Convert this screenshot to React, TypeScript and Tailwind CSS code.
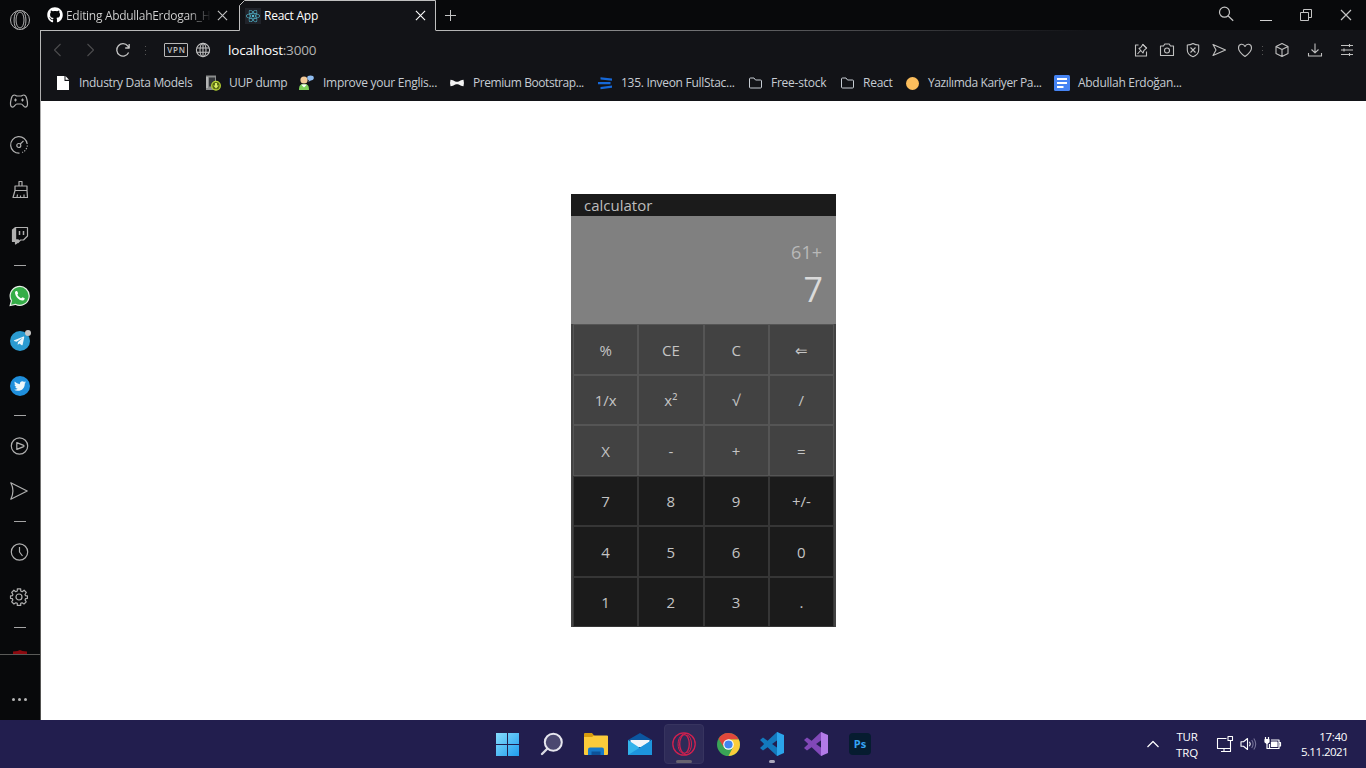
import type { ReactNode } from "react";
import { FaGithub, FaReact, FaTelegramPlane, FaTwitter } from "react-icons/fa";

type IconProps = { children: ReactNode; className?: string; box?: string; sw?: number };

function Line({ children, className = "h-5 w-5", box = "0 0 20 20", sw = 1.2 }: IconProps) {
  return (
    <svg viewBox={box} className={"shrink-0 " + className} fill="none" stroke="currentColor" strokeWidth={sw} strokeLinejoin="round">
      {children}
    </svg>
  );
}

function SideItem({ h, children }: { h: string; children: ReactNode }) {
  return <div className={"flex shrink-0 items-center justify-center " + h}>{children}</div>;
}

function Dash({ h }: { h: string }) {
  return (
    <SideItem h={h}>
      <span className="h-px w-3 bg-[#a5a5a5]" />
    </SideItem>
  );
}

function Sidebar() {
  return (
    <aside className="flex h-[720px] w-10 shrink-0 flex-col overflow-hidden bg-[#08090b] text-[#b0b0b0]">
      <SideItem h="h-10 w-10">
        <Line className="h-[22px] w-[22px]" box="0 0 22 22" sw={1}>
          <circle cx="11" cy="11" r="9.5" />
          <ellipse cx="11" cy="11" rx="4" ry="8" />
          <path d="M9 1.8C4 3 3.500 19 9 20.200M13 1.800C18 3 18.500 19 13 20.200" />
        </Line>
      </SideItem>
      <div className="h-[38px] shrink-0" />
      <SideItem h="h-[45px] w-[38px]">
        <Line>
          <path d="M5.500 4C6.500 4 7 5 8 5h4c1 0 1.500-1 2.500-1 2 0 2.700 1.200 3.200 3.500.500 2 .900 4.200.800 5.800-.100 1.800-.900 2.900-2.200 2.900-1.800 0-2.300-3.200-4.300-3.200H8c-2 0-2.500 3.200-4.300 3.200-1.300 0-2.100-1.100-2.200-2.900-.100-1.600.300-3.800.800-5.800C2.800 5.200 3.500 4 5.500 4z" />
          <path d="M5 9h3M6.500 7.500v3M12 9h3M13.500 7.500v3" strokeWidth="1" />
        </Line>
      </SideItem>
      <SideItem h="h-[44px] w-[38px]">
        <Line>
          <path d="M10.500 18.200A8.300 8.300 0 1 1 18.200 9" />
          <path d="M18.300 10.500a8.300 8.300 0 0 1-5 7" strokeDasharray="1.200 1.500" />
          <circle cx="9.800" cy="10.500" r="2" />
          <path d="M11.300 9l3.200-3.200" />
        </Line>
      </SideItem>
      <SideItem h="h-[45px] w-10">
        <Line>
          <path d="M9 6V1.500h3V6M5 6h12v4.500H5zM5 10.500L3 17.500h14.500l-.500-7M7 17.500l.500-3M10.500 17.500v-2M14 17.500v-3" />
        </Line>
      </SideItem>
      <SideItem h="h-[45px] w-10">
        <Line sw={1.2}>
          <path d="M5.500 2.500h12v8.500l-4 4h-3l-2.500 2.500v-2.500H5.500z" />
          <path d="M5.500 2.500L2.500 5v11.500h3v2.500l3-2.500v-1.500h-3z" fill="currentColor" />
          <path d="M9.500 6v4M13.500 6v4" strokeWidth="1.500" />
        </Line>
      </SideItem>
      <Dash h="h-[17px] w-10" />
      <SideItem h="h-[44px] w-10">
        <svg viewBox="0 0 22 22" className="h-[22px] w-[22px]">
          <path d="M1.200 20.500l1.300-4.800A9.500 9.500 0 1 1 6.300 19.300z" fill="#35ad48" stroke="#e9f2e9" strokeWidth="1.200" />
          <path d="M6 7.500C6 6.500 7 5.800 7.800 6c.500.100 1 1.400 1.300 2.300.100.500-.700 1.100-.700 1.500.600 1.500 2 2.700 3.600 3.400.600.100 1-1 1.500-1 .300 0 2 .800 2.200 1.100.100 1.500-1.200 2.300-2.400 2.300C9.500 15.200 6 11 6 7.500z" fill="#fff" />
        </svg>
      </SideItem>
      <SideItem h="h-[45px] w-10">
        <div className="relative flex h-5 w-5 items-center justify-center rounded-full bg-[#2b9bd1]">
          <FaTelegramPlane className="mr-0.5 h-3 w-3 text-[#eef7fb]" />
          <span className="absolute -top-[1px] -right-[1px] h-1.5 w-1.5 rounded-full bg-[#c6c6c6]" />
        </div>
      </SideItem>
      <SideItem h="h-[45px] w-10">
        <div className="flex h-5 w-5 items-center justify-center rounded-full bg-[#1f8fdc]">
          <FaTwitter className="h-3 w-3 text-[#eef7fb]" />
        </div>
      </SideItem>
      <Dash h="h-[15px] w-10" />
      <SideItem h="h-[45px] w-[39px]">
        <Line>
          <circle cx="9.500" cy="10" r="8.200" />
          <path d="M6.800 6.600v6.800L13.700 10.600q.700-.600 0-1.200z" />
        </Line>
      </SideItem>
      <SideItem h="h-[46px] w-[38px]">
        <Line>
          <path d="M1.800 1.800L18.200 10 1.800 18.200C4.500 13 4.500 7 1.800 1.800z" />
        </Line>
      </SideItem>
      <Dash h="h-[15px] w-10" />
      <SideItem h="h-[45px] w-[39px]">
        <Line>
          <circle cx="9.500" cy="10" r="8.200" />
          <path d="M9.500 5v5l3 4" />
        </Line>
      </SideItem>
      <SideItem h="h-[45px] w-[38px]">
        <Line>
          <circle cx="10" cy="10" r="3" />
          <path d="M8.300 4V1.800h3.400V4l1.500.700 1.900-1.500 2.200 2.300-1.300 2 .500 1.200 1.900.200v2.400l-1.900.400-.500 1.200 1.200 1.900-2.200 2.200-1.900-1.200-1.400.600v2H8.300v-2l-1.500-.600-1.900 1.200-2.200-2.200 1.200-1.900-.500-1.200-1.900-.400V8.900l1.900-.200.500-1.200-1.200-2 2.200-2.300 1.900 1.500z" />
        </Line>
      </SideItem>
      <Dash h="h-4 w-10" />
      <div className="flex h-[20px] shrink-0 items-end justify-center border-b border-[#5a5a58]">
        <svg viewBox="0 0 14 4" className="h-1 w-3.5">
          <path d="M0 4V1.500L4.500 1 7 0l2.500 1L14 1.500V4z" fill="#8c0a10" />
        </svg>
      </div>
      <div className="flex h-[88px] w-[39px] shrink-0 items-center justify-center gap-[3px]">
        <span className="h-[3px] w-[3px] rounded-full bg-[#b5b5b5]" />
        <span className="h-[3px] w-[3px] rounded-full bg-[#b5b5b5]" />
        <span className="h-[3px] w-[3px] rounded-full bg-[#b5b5b5]" />
      </div>
    </aside>
  );
}

function Cross({ className }: { className: string }) {
  return (
    <Line className={className} box="0 0 12 12" sw={1.2}>
      <path d="M1 1l10 10M11 1L1 11" />
    </Line>
  );
}

function TabStrip() {
  return (
    <header className="flex h-[31px] shrink-0 bg-[#08090b] text-[#c4c4c4]">
      <div className="flex w-[199px] items-center border-b border-[#b9b9b9] pl-[7px]">
        <FaGithub className="h-4 w-4 shrink-0 text-white" />
        <div className="ml-[3px] w-[144px] overflow-hidden bg-gradient-to-r from-[#d4d4d4] from-85% to-[#1a1b1d] bg-clip-text pt-px text-[12px] tracking-[-0.300px] whitespace-nowrap text-transparent">
          Editing AbdullahErdogan_H
        </div>
        <Cross className="ml-[7px] h-[11px] w-[11px]" />
      </div>
      <div className="relative flex w-[197px] items-center pl-[6px]">
        <svg viewBox="0 0 197 31" className="absolute inset-0 h-[31px] w-[197px]">
          <path d="M0.500 31V5.500L5.500 0.500H196.500V31z" fill="#121317" />
          <path d="M0 30.500H0.500V5.500L5.500 0.500H196.500V30.500" fill="none" stroke="#bfbfbf" />
        </svg>
        <div className="relative flex h-4 w-4 items-center justify-center bg-[#20232a]">
          <FaReact className="h-3.5 w-3.5 text-[#53b9d1]" />
        </div>
        <span className="relative ml-[3px] w-[150px] pt-px text-[12px] font-medium tracking-[-0.250px] text-white">React App</span>
        <Cross className="relative ml-[1px] h-[11px] w-[11px] text-white" />
      </div>
      <div className="flex flex-1 flex-col">
        <div className="flex h-[30px] items-center justify-between">
          <Line className="ml-[9px] h-[11px] w-[11px]" box="0 0 11 11" sw={1}>
            <path d="M5.500 0v11M0 5.500h11" />
          </Line>
          <div className="flex">
            <div className="flex w-10 items-center justify-center">
              <Line className="mb-0.5 h-4 w-4" box="0 0 16 16">
                <circle cx="6.500" cy="6.200" r="5" />
                <path d="M10.200 10l5 4.800" />
              </Line>
            </div>
            <div className="flex w-10 items-center justify-center">
              <span className="mt-[10px] h-px w-3 bg-[#d0d0d0]" />
            </div>
            <div className="flex w-10 items-center justify-center">
              <Line className="h-3 w-3" box="0 0 12 12" sw={1}>
                <path d="M0.500 3.500h8v8h-8zM3.500 3.500v-3h8v8h-3" />
              </Line>
            </div>
            <div className="flex w-10 items-center justify-center">
              <Cross className="h-3 w-3" />
            </div>
          </div>
        </div>
        <div className="h-px bg-gradient-to-r from-[#b9b9b9] to-[#121317] to-70%" />
      </div>
    </header>
  );
}

function Dots() {
  return (
    <span className="flex flex-col items-center gap-[3px]">
      <span className="h-px w-px bg-[#555]" />
      <span className="h-px w-px bg-[#555]" />
      <span className="h-px w-px bg-[#555]" />
    </span>
  );
}

function Tool({ w, children }: { w: string; children: ReactNode }) {
  return (
    <div className={"flex shrink-0 items-center justify-center " + w}>
      <Line className="h-4 w-4" box="0 0 16 16" sw={1.1}>
        {children}
      </Line>
    </div>
  );
}

function Toolbar() {
  return (
    <div className="flex h-[38px] shrink-0 items-center justify-between text-[#c0c0c0]">
      <div className="flex items-center">
        <div className="flex text-[#4b4b4e]">
          <Tool w="w-[34px]">
            <path d="M10.500 2L4.500 8l6 6" />
          </Tool>
          <Tool w="w-[32px]">
            <path d="M4.500 2l6 6-6 6" />
          </Tool>
        </div>
        <div className="flex w-[32px] justify-center text-[#c4c4c4]">
          <Line className="h-4 w-4" box="0 0 16 16" sw={1.3}>
            <path d="M13.600 10.500A6.200 6.200 0 1 1 12.800 4L14 5.800M14.200 2v4h-4" />
          </Line>
        </div>
        <div className="flex w-3 justify-center">
          <Dots />
        </div>
        <div className="ml-[13px] flex h-[14px] w-6 items-center justify-center rounded-[1px] border border-[#b8b8b8] pl-px text-[8px] font-semibold tracking-[0.800px]">
          VPN
        </div>
        <div className="ml-[7px]">
          <Line className="h-4 w-4" box="0 0 16 16" sw={1.1}>
            <circle cx="8" cy="8" r="6.600" />
            <ellipse cx="8" cy="8" rx="3" ry="6.600" />
            <path d="M1.700 6h12.600M1.700 10.300h12.600M8 1.400v13.200" />
          </Line>
        </div>
        <span className="ml-[17px] text-[13.500px] tracking-[-0.200px] text-[#b4b4b4]">
          <span className="text-white">localhost</span>:3000
        </span>
      </div>
      <div className="flex items-center">
        <Tool w="w-[26px]">
          <path d="M5.500 3H2.500v11h11V9.500M4.500 12l3.500-4M6 6.500l4 4.500 .800-2.300 2.700-2.500-3.700-3.700-2 3z" />
          <path d="M9.500 2.200l4.400 4.200" />
        </Tool>
        <Tool w="w-[26px]">
          <path d="M1.500 4h3l1.300-2h4.400l1.300 2h3v9.500h-13z" />
          <circle cx="8" cy="8.500" r="2.500" />
        </Tool>
        <Tool w="w-[26px]">
          <path d="M8 1.500c2 1.200 4 1.500 5.700 1.500v5c0 3.500-3 5.800-5.700 6.700C5.300 13.800 2.300 11.500 2.300 8V3C4 3 6 2.700 8 1.500zM5.500 5.500l5 5M10.500 5.500l-5 5" />
        </Tool>
        <Tool w="w-[26px]">
          <path d="M2 2.500L14.500 8 2 13.500 5 8z" />
        </Tool>
        <Tool w="w-[26px]">
          <path d="M8 14.500C4.500 12 1.500 9 1.500 6c0-4.500 5-5 6.500-1.500C9.500 1 14.500 1.500 14.500 6c0 3-3 6-6.500 8.500z" />
        </Tool>
        <span className="flex w-2 justify-center">
          <Dots />
        </span>
        <Tool w="w-8">
          <path d="M8 1.500l6 3v7l-6 3-6-3v-7zM2 4.500l6 3 6-3M8 7.500v7" />
        </Tool>
        <Tool w="w-[33px]">
          <path d="M8 1.500v9M4.500 7.500L8 10.800l3.500-3.300M1.500 11v3h13v-3" />
        </Tool>
        <Tool w="w-[32px]">
          <path d="M2 3.500h12M2 8h12M2 12.500h12M10.500 2v3M5 6.500v3M10.500 11v3" />
        </Tool>
        <div className="w-[3px]" />
      </div>
    </div>
  );
}

function Folder() {
  return (
    <Line className="h-4 w-4" box="0 0 16 16" sw={1}>
      <path d="M1.500 4q0-1 1-1h3.500l1.500 2h5q1 0 1 1v6q0 1-1 1h-10q-1 0-1-1z" />
    </Line>
  );
}

const bookmarks: { w: string; label: string; track: string; icon: ReactNode }[] = [
  {
    w: "w-[149px]",
    label: "Industry Data Models",
    track: "tracking-[-0.320px]",
    icon: (
      <svg viewBox="0 0 16 16" className="h-4 w-4">
        <path d="M1 1h7.500v5H13v9H1z M9.500 1L13 4.800H9.500z" fill="#fff" />
      </svg>
    ),
  },
  {
    w: "w-[93px]",
    label: "UUP dump",
    track: "ml-px tracking-[-0.350px]",
    icon: (
      <svg viewBox="0 0 16 16" className="h-4 w-4">
        <path d="M1 .500h10v14.500H1z" fill="#8a8c8c" />
        <path d="M4 2.500h6v9H4z" fill="#33363a" />
        <path d="M2 2v11" stroke="#ddd" />
        <circle cx="11" cy="10.700" r="4.300" fill="#5a6a14" stroke="#b6d333" strokeWidth="1.300" />
        <path d="M10 8h2v2.500h1.700L11 13.500l-2.700-3H10z" fill="#d9ee63" />
      </svg>
    ),
  },
  {
    w: "w-[151px]",
    label: "Improve your Englis...",
    track: "ml-[2px] tracking-[-0.280px]",
    icon: (
      <svg viewBox="0 0 16 16" className="h-4 w-4">
        <circle cx="6" cy="5" r="3.600" fill="#f2c998" />
        <path d="M1 15c0-4 1-6 5-6s5 2 5 6z" fill="#7fd05a" />
        <path d="M3 9.500l3 3 3-3z" fill="#fff" />
        <ellipse cx="12.500" cy="3" rx="3.300" ry="2.400" fill="#8fbcf0" />
        <path d="M11 4.500l-.500 2.500 2.500-2z" fill="#8fbcf0" />
      </svg>
    ),
  },
  {
    w: "w-[149px]",
    label: "Premium Bootstrap...",
    track: "ml-px tracking-[-0.430px]",
    icon: (
      <svg viewBox="0 0 16 16" className="h-4 w-4">
        <path d="M1.500 4.800c2 .300 4 1.200 5.500 2h2c1.500-.800 3.500-1.700 5.500-2q.900 3.200 0 6.400c-2-.300-4-1.200-5.500-2H7c-1.500.800-3.500 1.700-5.500 2q-.900-3.200 0-6.400z" fill="#f3f3f3" />
      </svg>
    ),
  },
  {
    w: "w-[150px]",
    label: "135. Inveon FullStac...",
    track: "tracking-[-0.290px]",
    icon: (
      <svg viewBox="0 0 16 16" className="h-4 w-4">
        <path d="M2.500 2.200l11.500 1.400v2.200L2.500 4.500zM0 7h12.500v2.200H0zM2.500 11.900L14 10.600v2.200L2.500 14.200z" fill="#1668d8" />
      </svg>
    ),
  },
  { w: "w-[92px]", label: "Free-stock", track: "tracking-[-0.250px]", icon: <Folder /> },
  { w: "w-[65px]", label: "React", track: "tracking-[-0.250px]", icon: <Folder /> },
  {
    w: "w-[149px]",
    label: "Yazılımda Kariyer Pa...",
    track: "tracking-[-0.390px]",
    icon: <span className="ml-px h-[13px] w-[13px] rounded-full bg-[#fbbd5c]" />,
  },
  {
    w: "w-[149px]",
    label: "Abdullah Erdoğan...",
    track: "ml-px tracking-[-0.280px]",
    icon: (
      <svg viewBox="0 0 16 16" className="h-4 w-4">
        <rect width="16" height="16" rx="1.500" fill="#4684f3" />
        <path d="M3 4h10M3 8h10M3 12h6.500" stroke="#fff" strokeWidth="1.800" />
      </svg>
    ),
  },
];

function Bookmarks() {
  return (
    <nav className="flex h-[32px] shrink-0 items-center pb-[4px] pl-[15px] text-[#c6ccd3]">
      {bookmarks.map((b) => (
        <div key={b.label} className={"flex shrink-0 items-center gap-[7px] " + b.w}>
          <span className="flex w-4 shrink-0">{b.icon}</span>
          <span className={"text-[12px] whitespace-nowrap " + b.track}>{b.label}</span>
        </div>
      ))}
    </nav>
  );
}

const keys = [
  "%", "CE", "C", "⇐",
  "1/x", "x²", "√", "/",
  "X", "-", "+", "=",
  "7", "8", "9", "+/-",
  "4", "5", "6", "0",
  "1", "2", "3", ".",
];

function Calculator() {
  return (
    <section className="mt-[93px] ml-[530px] flex h-[433px] w-[265px] flex-col bg-[#434343]">
      <div className="h-[22px] bg-[#1b1b1b] pl-[13px] text-[15px] leading-[23px] text-[#bdbdbd]">calculator</div>
      <div className="flex h-[108px] flex-col items-end bg-[#808080] pt-[23px] pr-[13px]">
        <div className="pr-px text-[18px] leading-[26px] text-[#b9b9b9]">61+</div>
        <div className="text-[34px] leading-[48px] text-[#dadada]">7</div>
      </div>
      <div className="grid h-[303px] grid-cols-4 grid-rows-6 px-0.5">
        {keys.map((k, i) => (
          <button
            key={k}
            className={
              "flex items-center justify-center border pt-px text-[15px] text-[#c4c4c4] " +
              (i < 12 ? "border-[#555555] bg-[#424242]" : "border-[#363636] bg-[#1b1b1b]")
            }
          >
            {k}
          </button>
        ))}
      </div>
    </section>
  );
}

function Visual({ left, right }: { left: string; right: string }) {
  return (
    <svg viewBox="0 0 26 26" className="h-[26px] w-[26px]">
      <path d="M1 9l3-2.500L20 18v6L18 25z" fill={left} />
      <path d="M1 17l3 2.500L20 8V2l-2-1z" fill={left} />
      <path d="M18 1l7 3v18l-7 3z" fill={right} />
    </svg>
  );
}

const apps: { name: string; icon: ReactNode }[] = [
  {
    name: "start",
    icon: (
      <svg viewBox="0 0 23 23" className="h-[23px] w-[23px]">
        <defs>
          <linearGradient id="win" x1="0" y1="0" x2="1" y2="1" gradientUnits="objectBoundingBox">
            <stop offset="0" stopColor="#86dcfd" />
            <stop offset="1" stopColor="#1f9dee" />
          </linearGradient>
        </defs>
        <path d="M0 0h11v11H0zM12 0h11v11H12zM0 12h11v11H0zM12 12h11v11H12z" fill="url(#win)" />
      </svg>
    ),
  },
  {
    name: "search",
    icon: (
      <svg viewBox="0 0 24 24" className="h-6 w-6">
        <path d="M7.500 16.500L2 22" stroke="#d9d9e3" strokeWidth="2.400" strokeLinecap="round" />
        <circle cx="13.300" cy="10.300" r="8.500" fill="#4b4870" stroke="#e6e6ee" strokeWidth="2" />
      </svg>
    ),
  },
  {
    name: "files",
    icon: (
      <svg viewBox="0 0 24 22" className="h-[22px] w-6">
        <path d="M0 1q0-1 1-1h7l2.500 3H24v6H0z" fill="#d79b0c" />
        <path d="M0 4h8l2-1.500h13q1 0 1 1V21q0 1-1 1H1q-1 0-1-1z" fill="#fccb3a" />
        <path d="M4 22v-5.500q0-2 2-2h12q2 0 2 2V22z" fill="#1779c8" />
        <path d="M7.500 18.500h9V22h-9z" fill="#0d5299" />
      </svg>
    ),
  },
  {
    name: "mail",
    icon: (
      <svg viewBox="0 0 24 22" className="h-[22px] w-6">
        <path d="M0 7L12 0l12 7v6H0z" fill="#0b56a0" />
        <path d="M2.500 7h19v7h-19z" fill="#f2f5f8" />
        <path d="M0 7l12 8 12-8v15H0z" fill="#33b3ea" />
        <path d="M0 22l12-7.500L24 7v15z" fill="#1d94dc" />
      </svg>
    ),
  },
  {
    name: "opera",
    icon: (
      <svg viewBox="0 0 24 24" className="h-6 w-6" fill="none" stroke="#d3204f" strokeWidth="1.300">
        <circle cx="12" cy="12" r="11.200" />
        <ellipse cx="12.500" cy="12" rx="4.800" ry="9.300" />
        <path d="M14.500 1.500C3.500 1 3 23 14.500 22.500M15 2.800c6 2 6 16.400 0 18.400" strokeWidth="1" />
      </svg>
    ),
  },
  {
    name: "chrome",
    icon: (
      <svg viewBox="0 0 24 24" className="h-[23px] w-[23px]">
        <circle cx="12" cy="12" r="12" fill="#3aa456" />
        <path d="M12 6.500H22.600A12 12 0 0 1 12 24L16.800 14.700z" fill="#fbcc3a" />
        <path d="M1.600 6A12 12 0 0 1 22.600 6.500H12L7 14.500z" fill="#e0473b" />
        <circle cx="12" cy="12" r="5.500" fill="#fff" />
        <circle cx="12" cy="12" r="4.300" fill="#4285f0" />
      </svg>
    ),
  },
  { name: "code", icon: <Visual left="#1379bd" right="#2ba4ea" /> },
  { name: "studio", icon: <Visual left="#8148b8" right="#b27be8" /> },
  {
    name: "ps",
    icon: (
      <div className="flex h-[22px] w-[22px] items-center justify-center rounded-[4px] bg-[#061c30] text-[11px] font-bold text-[#35a3f5]">
        Ps
      </div>
    ),
  },
];

function Taskbar() {
  return (
    <footer className="flex h-12 shrink-0 items-center justify-between bg-[#221e4e] text-white">
      <div className="ml-[485px] flex">
        {apps.map((a) => (
          <div key={a.name} className={"flex h-12 items-center justify-center " + (a.name === "start" ? "w-[45px]" : "w-11")}>
            <div
              className={
                "relative flex h-10 w-10 items-center justify-center rounded-[4px] " +
                (a.name === "opera" ? "border border-[#37345f] bg-[#2e2b58]" : "")
              }
            >
              {a.icon}
              {a.name === "opera" && <span className="absolute bottom-0 h-[3px] w-4 rounded-full bg-[#67636f]" />}
              {a.name === "code" && <span className="absolute bottom-px h-[3px] w-1.5 rounded-full bg-[#a9a7bb]" />}
            </div>
          </div>
        ))}
      </div>
      <div className="flex items-center text-[11.500px] leading-4">
        <Line className="h-3 w-3" box="0 0 12 12" sw={1.2}>
          <path d="M0.500 9L6 3.500 11.500 9" />
        </Line>
        <div className="ml-[12px] w-[32px] pt-px text-center tracking-[-0.200px]">
          <div>TUR</div>
          <div>TRQ</div>
        </div>
        <Line className="ml-[13px] h-[18px] w-[18px]" box="0 0 18 18" sw={1.1}>
          <path d="M10.500 3.500H1.500v10H14M5 16.500h6M8 13.500v3M14.500 6v10.500H11M12 1.500h4.500v4H12z" />
        </Line>
        <Line className="ml-[6px] h-[16px] w-[18px]" box="0 0 18 16" sw={1.1}>
          <path d="M1 5.700h2.500L7.500 2.500v11L3.500 10.300H1zM9.500 5.800q1.500 2.200 0 4.400" />
          <path d="M11.700 4q2.800 4 0 8M13.800 2.500q3.800 5.500 0 11" stroke="#77749a" />
        </Line>
        <Line className="ml-[6px] h-[16px] w-[18px]" box="0 0 18 16" sw={1.2}>
          <path d="M7 4h8v8.500H5.500V8M15 6.500h1.500v3.500H15M1.500 1v2.500M4.500 1v2.500M3 7.500v5h3" />
          <path d="M1 3.500h4v2.500L3 7.500 1 6zM7.500 6h5.500v4.500H7.500z" fill="currentColor" />
        </Line>
        <div className="mr-[18px] ml-[13px] flex w-[53px] flex-col items-end">
          <div className="-mb-px pr-px tracking-[-0.300px]">17:40</div>
          <div className="tracking-[-0.550px]">5.11.2021</div>
        </div>
      </div>
    </footer>
  );
}

export default function App() {
  return (
    <div className="flex h-[768px] w-[1366px] flex-col overflow-hidden font-['Open_Sans','Noto_Sans',sans-serif]">
      <div className="flex h-[720px] shrink-0">
        <Sidebar />
        <div className="flex flex-1 flex-col">
          <TabStrip />
          <div className="flex flex-1">
            <div className="w-px bg-gradient-to-b from-[#b9b9b9] to-[#50504e]" />
            <div className="flex flex-1 flex-col bg-[#121317]">
              <Toolbar />
              <Bookmarks />
              <main className="flex-1 bg-white">
                <Calculator />
              </main>
            </div>
          </div>
        </div>
      </div>
      <Taskbar />
    </div>
  );
}
